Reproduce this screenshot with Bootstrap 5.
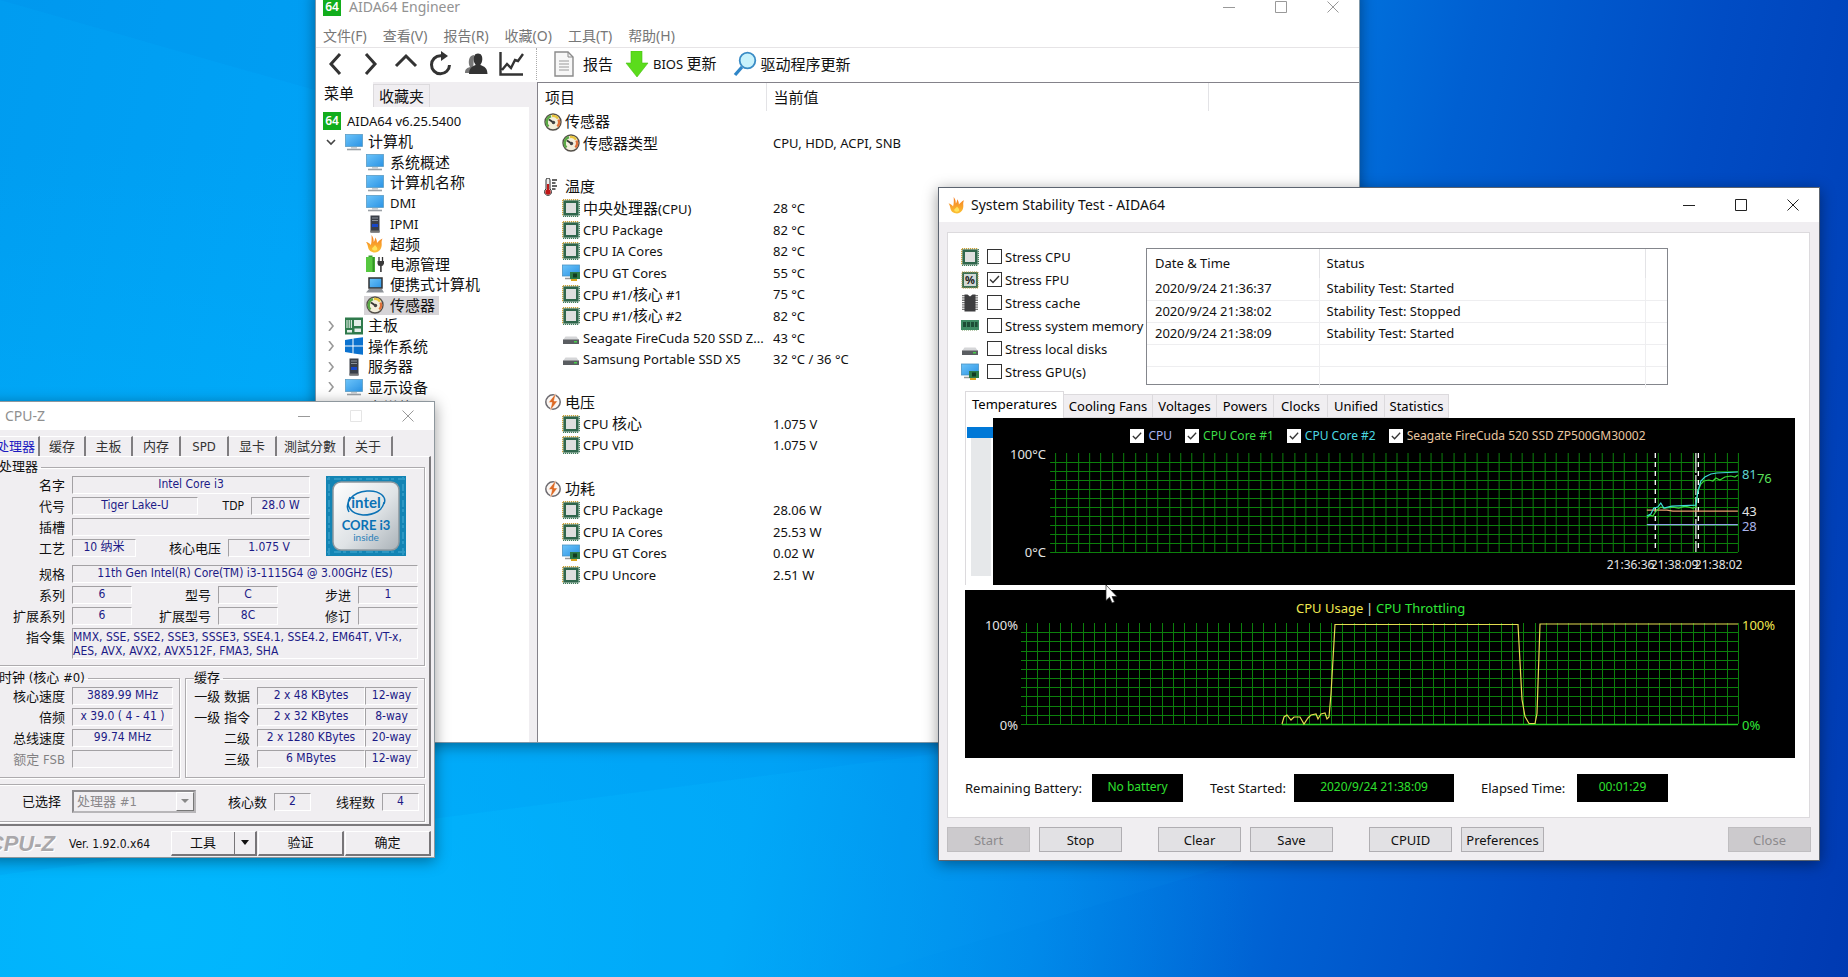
<!DOCTYPE html>
<html lang="zh-CN">
<head>
<meta charset="utf-8">
<meta name="viewport" content="width=device-width, initial-scale=1">
<title>Desktop</title>
<link rel="stylesheet" href="https://cdn.jsdelivr.net/npm/bootstrap@5.3.0/dist/css/bootstrap.min.css">
<style>
:root{--face:#f0eef1;--edge:#dcdadd;--ui:"Noto Sans","Noto Sans CJK SC",sans-serif;--tahoma:"DejaVu Sans Condensed","Noto Sans CJK SC",sans-serif}
body{font:13px/18px var(--ui);color:#111;background:#0a6fdc}
.desktop{min-height:100vh;overflow:hidden;background:
 radial-gradient(ellipse 60% 80% at 8% 95%,rgba(0,190,255,.8),rgba(0,190,255,0) 100%),
 linear-gradient(102deg,#009cf0 0%,#00a4f8 22%,#009cf4 45%,#0080e6 60%,#0060d2 72%,#004cc4 84%,#003ab2 100%)}
.rays{position:absolute;inset:0;width:100%;height:100%}
.win{position:absolute;background:#fff;box-shadow:0 3px 14px rgba(0,0,0,.4)}
.zh{font-size:15px}
.ico{width:18px;height:18px;flex:none}
.wbtn{width:52px;border:0;background:none;padding:0;color:#222;line-height:0}
.wbtn svg{width:12px;height:12px}
.dim .wbtn{color:#999}
.plain{border:0;background:none;padding:0;color:inherit}

/* AIDA64 main window */
.w-aida{left:315px;right:488px;top:-12px;border:1px solid #7f97a8}
.w-aida .titlebar{height:36px;color:#929292;font-size:14px;padding-left:7px}
.menubar{height:22px;color:#777;gap:16px;padding-left:7px}
.menubar button{font-size:14px}
.toolbar{height:35px;border-top:1px solid #e6e4e6;padding:0 0 3px 2px}
.tool{width:35px;height:32px;color:#333;line-height:0}
.tool svg{width:26px;height:26px}
.vdots{border-left:1px dotted #aaa;height:32px}
.side{width:222px;flex:none;background:var(--face);border-right:1px solid #84828a;padding-right:8px}
.sidetabs{height:25px}
.sidetabs button{font-size:15px;height:23px;padding:0 5px}
.sidetabs .on{background:#fff;width:57px;height:25px;padding:0 0 4px 8px;text-align:left}
.sidetabs .off{border:1px solid var(--edge);border-bottom:0;align-self:end}
.tree{background:#fff;display:grid;grid-template-rows:repeat(15,1fr);height:311px;padding:4px 0 0 7px;margin:0;list-style:none}
.tree li{display:flex;align-items:center}
.tree .chev{width:10px;height:10px;margin:0 9px 0 3px;color:#888}
.tree .t2{padding-left:43px}
.tree .sel{background:#d6d4d7;padding:0 4px 0 2px;margin-left:-2px;display:flex;align-items:center}
.tree .txt{margin-left:6px;white-space:nowrap}
.tree .t1 .txt{margin-left:5px}
.aidabody{min-height:660px}
.mainlist{border-top:1px solid #84828a;min-width:0}
.grid-t{table-layout:fixed;width:100%;border-collapse:collapse}
.grid-t td,.grid-t th{padding:0;font-weight:400;white-space:nowrap;line-height:18px}
.grid-t th{border-right:1px solid #e3e3e6}
.grid-t th:last-child{border:0}
.sensors th{height:28px;padding-left:7px}
.sensors tbody{height:475px}
.sensors tbody td{height:21px}
.sensors td+td{padding-left:7px}
.sensors .it{display:flex;align-items:center;gap:3px;padding-left:6px}
.sensors .sub{padding-left:24px}

/* Stability test */
.w-stab{left:938px;right:28px;top:187px;border:1px solid #5c6470;background:var(--face)}
.w-stab .titlebar{height:34px;background:#fff;font-size:14px}
.panelbox{background:#fff;border:1px solid var(--edge);margin:10px 9px 9px 8px;padding:15px 14px 15px 17px}
.checks{width:181px;margin:-3px 0 0 -4px}
.chk{height:23px;display:flex;align-items:center}
.chk label{margin-left:3px;white-space:nowrap}
.box{appearance:none;width:15px;height:15px;border:1px solid #333;background:#fff;margin:0;flex:none;border-radius:0}
.box:checked{background:#fff url("data:image/svg+xml,%3Csvg xmlns='http://www.w3.org/2000/svg' viewBox='0 0 13 13'%3E%3Cpath d='M2 6.5l3 3 6-6.5' fill='none' stroke='%23333' stroke-width='1.4'/%3E%3C/svg%3E")}
.logbox{width:522px;height:137px;border:1px solid #84868c}
.log th{height:29px;padding:0 0 1px 8px}
.log td{height:22px;line-height:17px;padding:0 0 0 8px;border:1px solid #eeeef0;border-left:0}
.log th+th,.log td+td{padding-left:7px}
.log td:last-child{border-right:0}
.log tr:last-child td{border-bottom:0}.log tbody tr:first-child td{border-top:0}
.ptabs{margin-top:7px;height:26px;align-items:flex-end}
.ptabs button{background:var(--face);border:1px solid var(--edge);border-left:0;height:24px;padding:0;flex:none}
.ptabs .on{background:#fff;border-left:1px solid var(--edge);border-bottom:0;height:27px;padding-bottom:3px}
.trk{width:28px;flex:none;padding:9px 0 0 1px;border-left:1px solid var(--edge)}
.trk input{appearance:none;writing-mode:vertical-lr;width:27px;height:149px;margin:0;display:block;background:linear-gradient(#e6e8ea,#e6e8ea) 4px 0/20px 100% no-repeat}
.trk input::-webkit-slider-thumb{appearance:none;width:27px;height:11px;background:#0078d7;border:0;border-radius:0}
.plot{background:#000;color:#e8e8e8}
.plot svg{display:block;width:100%;height:auto;overflow:visible}
.legend-row{height:34px;padding-top:1px;gap:13px;padding-right:12px;font-size:12px}
.legend-row .box{width:14px;height:14px;border-color:#fff}
.plot-low{margin-top:5px}
.lcd{background:#000;color:#2fe02f;height:28px;font-size:12px;line-height:26px;text-align:center;flex:none}
.lcd-s{width:91px}.lcd-l{width:160px}
.cap1{width:127px}.cap2{width:111px;padding-left:27px}.cap3{width:123px;padding-left:27px}
.wbs{gap:9px;padding:0 8px 8px}
.wbs .apart{margin-left:27px}
.wb{height:25px;width:83px;background:#e2e1e4;border:1px solid #b0aeb2;padding:0;line-height:20px;white-space:nowrap;color:#111}
.wb:disabled{background:#cccacd;border-color:#bfbdc0;color:#8c8a8d}

/* CPU-Z */
.w-cpuz{left:-14px;width:449px;top:401px;border:1px solid #8e979d;background:var(--face);font:12px/16px var(--tahoma)}
.w-cpuz .titlebar{height:28px;background:#fff;color:#8f8f8f;font-size:14px;padding-left:18px;font-family:var(--ui)}
.cz-tabs{padding:6px 0 0 6px;height:26px;font-size:13px}
.cz-tabs button{border-right:2px solid #7f7d80;border-top:1px solid #fff;height:20px;color:#333;white-space:nowrap;padding:0}
.cz-tabs .on{color:#1c1ac0}
.cz-page{border-right:2px solid #7b797c;border-bottom:2px solid #7b797c;border-top:1px solid #fff;margin-right:3px;padding:2px 4px 2px 5px}
.w-cpuz fieldset{border:1px solid #adabae;box-shadow:1px 1px 0 #fff,inset 1px 1px 0 #fff;padding:0 6px 6px 0}
.w-cpuz legend{float:none;width:auto;font-size:13px;line-height:16px;margin:0 0 1px 6px;padding:0 3px 0 0}
.fr{display:flex;height:17px;margin-bottom:4px}
.fr b{font-weight:400;font-size:13px;line-height:19px;text-align:right;padding-right:7px;white-space:nowrap;flex:none;width:79px;color:#111}
.fr b.tdp{font-size:12px;width:53px}
.fv{border:1px solid #a3a1a4;border-right-color:#fff;border-bottom-color:#fff;color:#1c1a86;text-align:center;white-space:nowrap;height:18px;flex:none;line-height:15px}
.w37{width:37px}.w53{width:53px}.w60{width:60px}.w101{width:101px}.w108{width:108px}.w238{width:238px}.w346{width:346px}
.fr b.l71{width:71px}.fr b.l78{width:78px}.fr b.l80{width:80px}.fr b.l86{width:86px}.fr b.l92{width:92px}
.spec{margin-top:5px}
.isa{line-height:14px;padding-top:1px}
.cz-clock{width:188px;margin-right:5px}.cz-cache{width:240px}
.w-cpuz fieldset.cz-pick{height:38px;margin-top:6px;padding:0 0 3px}
.cz-pick label{width:79px;font-size:13px;text-align:right;padding-right:11px}
.cz-sel{appearance:none;height:23px;width:124px;border:2px solid #8d8b8e;border-right-color:#b8b6b9;border-bottom-color:#b8b6b9;background:var(--face);color:#8a888b;padding:0 3px;font:13px/17px var(--tahoma);opacity:1}
.cz-drop{position:absolute;right:2px;top:2px;width:18px;height:19px;background:var(--face);border:1px solid #fff;border-right-color:#777;border-bottom-color:#777;pointer-events:none}
.cz-foot{padding:5px 3px 1px 0;gap:1px}
.cz-btn{height:25px;width:86px;background:var(--face);border:1px solid #fff;border-right:2px solid #777578;border-bottom:2px solid #777578;font-size:13px;padding:0;color:#111}
.cz-split{border-left:1px solid #777578;height:22px;padding:3px 5px 0;line-height:14px}
.cz-logo{width:68px;text-align:right;white-space:nowrap;font:italic bold 22px/24px "Liberation Sans",sans-serif;color:#a9a7aa;text-shadow:1px 1px 0 #fff}
.cz-ver{padding-left:13px}
.pointer{position:absolute;left:1105px;top:584px;width:13px;height:20px}
</style>
</head>
<body>
<svg width="0" height="0" class="position-absolute" aria-hidden="true">
<defs>
<linearGradient id="gm" x1="0" y1="0" x2="1" y2="1"><stop offset="0" stop-color="#6cc4fa"/><stop offset="1" stop-color="#2b93e4"/></linearGradient>
<linearGradient id="gf" x1="0" y1="0" x2="0" y2="1"><stop offset="0" stop-color="#f47a22"/><stop offset="1" stop-color="#fcc234"/></linearGradient>
<symbol id="i64" viewBox="0 0 18 18"><rect width="18" height="18" fill="#12ad1c"/><text x="9" y="13" font-size="12" font-weight="600" fill="#fff" text-anchor="middle" font-family="Noto Sans">64</text></symbol>
<symbol id="mon" viewBox="0 0 18 18"><rect x=".5" y="1.500" width="17" height="12" fill="url(#gm)" stroke="#5b9cc4" stroke-width=".8"/><path d="M6 14h6v1.500H6z" fill="#c8ccd0"/><path d="M2 16.500h14" stroke="#9aa0a6" stroke-width="1.600"/></symbol>
<symbol id="srv" viewBox="0 0 18 18"><rect x="4.500" y=".5" width="9" height="17" fill="#3a3f48"/><path d="M6 3h6M6 5.500h6" stroke="#8b929c"/><path d="M6 9h6v3H6z" fill="#1747c8"/><path d="M4.500 16.500h9" stroke="#777" stroke-width="2"/></symbol>
<symbol id="fire" viewBox="0 0 18 18"><path d="M5.500 0c1.800 2.500 2.300 4.500 2.200 7C8.700 6 9.200 4 9 2.500c1.500 1.500 2 3.500 2 5.500 1.500-1.500 3-3.500 5.500-4.500-1 2-1 3.500-.8 5.500.3 4.500-2.700 8.500-6.700 8.500S2.500 15 2 12C1.700 10 1 8 0 7c2 .3 3.500 1.300 4.800 3C5.800 7 5.700 3.500 5.500 0z" fill="url(#gf)"/><path d="M9 10c1 1.500 2.500 2 2.300 4.500C10 16.300 7 16 6 14c0-1.500 2-2 3-4z" fill="#ffe25a"/></symbol>
<symbol id="bat" viewBox="0 0 18 18"><rect x="0" y="2" width="9" height="15" fill="#56c840"/><rect x="2.500" y=".5" width="4" height="1.500" fill="#3b9c2c"/><path d="M7.500 2v15" stroke="#349426" stroke-width="2"/><path d="M13 2v4M16.500 2v4" stroke="#333" stroke-width="1.300"/><path d="M11.500 6h6.500v2.500q-.8 2.500-2.300 2.500v6h-1.600v-6Q11.700 11 11.500 8.500z" fill="#3a3a3a"/></symbol>
<symbol id="lap" viewBox="0 0 18 18"><rect x="3" y="2" width="13" height="10" fill="url(#gm)" stroke="#333" stroke-width="1.500"/><path d="M3 13h13l2 3.500H0z" fill="#8d9298"/></symbol>
<symbol id="gau" viewBox="0 0 18 18"><circle cx="9" cy="9" r="8" fill="#f3eedb" stroke="#54504a" stroke-width="1.400"/><path d="M4.500 13.500A6.200 6.200 0 0 1 7 3.200" fill="none" stroke="#5aa845" stroke-width="2.400"/><path d="M8 3a6.200 6.200 0 0 1 6 2.600" fill="none" stroke="#e8c43c" stroke-width="2.400"/><path d="M14.400 6.500a6.200 6.200 0 0 1-1 7" fill="none" stroke="#e07038" stroke-width="2.400"/><path d="M5 6.500l4.500 3" stroke="#333" stroke-width="1.800"/><circle cx="9.500" cy="9.500" r="1.700" fill="#444"/></symbol>
<symbol id="mob" viewBox="0 0 18 18"><rect width="18" height="17" y=".5" fill="#2f7a4c"/><path d="M2 3v8M4.200 3v8M6.400 3v8" stroke="#d7e6dc" stroke-width="1.200"/><path d="M9 3h7v6H9zM2 13h5v2.500H2zM9.500 11.500H16V15H9.500z" fill="#e4eee8"/></symbol>
<symbol id="wlogo" viewBox="0 0 18 18"><path d="M0 3l7.500-1.200v6.700H0zM8.500 1.600L18 .2v8.300H8.500zM0 9.500h7.500v6.700L0 15zM8.500 9.500H18v8.300l-9.500-1.400z" fill="#0b72cf"/></symbol>
<symbol id="chip" viewBox="0 0 18 18"><path d="M1 .8h16M.8 1v16" stroke="#c9a23c" stroke-width="1.500" stroke-dasharray="1.200 .8"/><path d="M1 17.300h16M17.300 1v16" stroke="#3f7b5a" stroke-width="1.300" stroke-dasharray="1.200 .8"/><rect x="1.400" y="1.400" width="15.200" height="15.200" fill="#2f664c"/><rect x="4" y="4" width="10" height="10" fill="#dedfdf"/></symbol>
<symbol id="fpu" viewBox="0 0 18 18"><rect x="1" y="1" width="16" height="16" fill="#3c7156" stroke="#b79c48" stroke-dasharray="1.200 .8"/><rect x="3" y="3" width="12" height="12" fill="#d2d8d4"/><text x="9" y="13" font-size="11" text-anchor="middle" font-weight="700" fill="#222" font-family="Noto Sans">%</text></symbol>
<symbol id="cache" viewBox="0 0 18 18"><path d="M2.500 1v16M15.500 1v16" stroke="#777" stroke-width="3" stroke-dasharray="1.300 1"/><path d="M3.500 .5h3l2.500 2 2.500-2h3v17h-11z" fill="#3d3d3f"/></symbol>
<symbol id="ram" viewBox="0 0 18 18"><path d="M0 3h18v10H0z" fill="#3f8b64"/><path d="M2 5h3v5H2zM6 5h3v5H6zM10 5h3v5h-3zM14 5h2.500v5H14z" fill="#1d4d36"/><path d="M1 13.500h16" stroke="#b5c9a8" stroke-dasharray="1 1"/></symbol>
<symbol id="disk" viewBox="0 0 18 18"><path d="M3.500 7.500h11l2.500 3.500H1z" fill="#d5d6d8"/><path d="M1 10.500h16V15H1z" fill="#5a5d61"/><path d="M12 12h3v1.500h-3z" fill="#48cf4c"/></symbol>
<symbol id="gpu" viewBox="0 0 18 18"><rect x=".5" y="1" width="17" height="11" fill="url(#gm)" stroke="#4a93c4" stroke-width=".8"/><path d="M3 14.500h6" stroke="#999" stroke-width="1.500"/><path d="M8 8h10v7H8z" fill="#2c7b48"/><path d="M11 9.500h4v4h-4z" fill="#123d22"/><path d="M9 16h6" stroke="#d9a520" stroke-width="2"/></symbol>
<symbol id="thermo" viewBox="0 0 18 18"><path d="M2 2a2 2 0 0 1 4 0v9a3.500 3.500 0 1 1-4 0z" fill="#eee" stroke="#333"/><path d="M4 6v6" stroke="#c01818" stroke-width="2.200"/><circle cx="4" cy="14" r="2.700" fill="#c01818"/><path d="M8 2h5M8 5h3.500M8 8h5M8 11h3.500" stroke="#333" stroke-width="1.300"/></symbol>
<symbol id="bolt" viewBox="0 0 18 18"><circle cx="9" cy="9" r="7.200" fill="#fbf6f2" stroke="#6c6a70" stroke-width="1.500"/><path d="M12 0L4.500 9.500H8L6 18l7.500-10H10z" fill="#dd6a25" stroke="#fff" stroke-width=".5"/></symbol>
<symbol id="wmin" viewBox="0 0 12 12"><path d="M0 6.500h12" stroke="currentColor"/></symbol>
<symbol id="wmax" viewBox="0 0 12 12"><path d="M.5 .5h11v11H.5z" fill="none" stroke="currentColor"/></symbol>
<symbol id="wcls" viewBox="0 0 12 12"><path d="M.5 .5l11 11M11.500 .5l-11 11" stroke="currentColor"/></symbol>
</defs>
</svg>

<main class="desktop position-relative">
<svg class="rays" viewBox="0 0 1848 977" preserveAspectRatio="none" aria-hidden="true">
  <path d="M860 977L1230 865 1400 700V300L0 880v97z" fill="#18a8ff" opacity=".06"/>
  <path d="M0 875L940 753V742H0z" fill="#0078e0" opacity=".08"/>
  <path d="M0 0L315 90V0z" fill="#0070d8" opacity=".08"/>
</svg>

<!-- AIDA64 Engineer -->
<section class="win w-aida" aria-label="AIDA64 Engineer">
  <header class="titlebar dim d-flex align-items-center">
    <svg class="ico"><use href="#i64"/></svg><span class="ms-2 me-auto">AIDA64 Engineer</span>
    <button class="wbtn" aria-label="Minimize"><svg><use href="#wmin"/></svg></button><button class="wbtn" aria-label="Maximize"><svg><use href="#wmax"/></svg></button><button class="wbtn" aria-label="Close"><svg><use href="#wcls"/></svg></button>
  </header>
  <nav class="menubar d-flex align-items-center">
    <button class="plain">文件(F)</button><button class="plain">查看(V)</button><button class="plain">报告(R)</button><button class="plain">收藏(O)</button><button class="plain">工具(T)</button><button class="plain">帮助(H)</button>
  </nav>
  <div class="toolbar d-flex align-items-center">
    <button class="plain tool" aria-label="Back"><svg viewBox="0 0 26 26"><path d="M17 3l-9 10 9 10" fill="none" stroke="currentColor" stroke-width="3"/></svg></button>
    <button class="plain tool" aria-label="Forward"><svg viewBox="0 0 26 26"><path d="M8 3l9 10-9 10" fill="none" stroke="currentColor" stroke-width="3"/></svg></button>
    <button class="plain tool" aria-label="Up"><svg viewBox="0 0 26 26"><path d="M3 15l10-10 10 10" fill="none" stroke="currentColor" stroke-width="3"/></svg></button>
    <button class="plain tool" aria-label="Refresh"><svg viewBox="0 0 26 26"><path d="M21.500 14a9 9 0 1 1-9-9.200h3" fill="none" stroke="currentColor" stroke-width="3"/><path d="M13 0l7 5-7 5z" fill="currentColor"/></svg></button>
    <button class="plain tool" aria-label="Users"><svg viewBox="0 0 26 26"><path d="M2 22c0-4 2-5 5-6-2-3-2-12 4-12l-1 18z" fill="#777"/><path d="M15 2.500c3.500 0 4.500 3 4.300 6-.2 2.500-1 4-2 5.500 4 1.500 7 2.500 7.200 9H6c.2-6 3-7.500 6.700-9-1-1.500-2-3-2-5.500 0-3 .8-6 4.300-6z" fill="currentColor"/></svg></button>
    <button class="plain tool" aria-label="Graph"><svg viewBox="0 0 26 26"><path d="M2.500 1v22.500H25M4 19l5-6 4 4 4-8 3 1 5-7" fill="none" stroke="currentColor" stroke-width="2.400"/></svg></button>
    <span class="vdots ms-2 ps-1 me-2"></span>
    <button class="plain d-flex align-items-center ms-1"><svg width="22" height="28" viewBox="0 0 22 28"><path d="M2 2h13l5 5v19H2z" fill="#f7f7f7" stroke="#8a8a8a" stroke-width="1.400"/><path d="M15 2v5h5" fill="none" stroke="#8a8a8a"/><path d="M6 11h10M6 14h10M6 17h10M6 20h10" stroke="#999"/></svg><span class="zh ms-2">报告</span></button>
    <button class="plain d-flex align-items-center ms-2 ps-1"><svg width="24" height="26" viewBox="0 0 24 26"><path d="M6 0h11v12h6L12 26 1 12h5z" fill="#5bdc1c" stroke="#48c010" stroke-width=".6"/></svg><span class="ms-1">BIOS <span class="zh">更新</span></span></button>
    <button class="plain d-flex align-items-center ms-3"><svg width="24" height="26" viewBox="0 0 24 26"><path d="M9 16l-7 8" stroke="#2f86c8" stroke-width="3.400"/><circle cx="14.500" cy="9.500" r="7.800" fill="#c8f2fc" stroke="#3a8cc6" stroke-width="1.800"/></svg><span class="zh ms-1">驱动程序更新</span></button>
  </div>
  <div class="aidabody d-flex">
    <div class="side d-flex flex-column">
      <div class="sidetabs d-flex"><button class="plain on">菜单</button><button class="plain off">收藏夹</button></div>
      <ul class="tree" id="tree"></ul>
      <div class="flex-grow-1 bg-white"></div>
    </div>
    <div class="mainlist flex-grow-1">
      <table class="grid-t sensors">
        <colgroup><col style="width:228px"><col style="width:442px"><col></colgroup>
        <thead><tr><th class="zh">项目</th><th class="zh">当前值</th><th></th></tr></thead>
        <tbody id="sensors"></tbody>
      </table>
    </div>
  </div>
</section>

<!-- System Stability Test -->
<section class="win w-stab" aria-label="System Stability Test">
  <header class="titlebar d-flex align-items-center">
    <svg class="ms-2 me-1" width="20" height="17"><use href="#fire"/></svg><span class="me-auto">System Stability Test - AIDA64</span>
    <button class="wbtn" aria-label="Minimize"><svg><use href="#wmin"/></svg></button><button class="wbtn" aria-label="Maximize"><svg><use href="#wmax"/></svg></button><button class="wbtn" aria-label="Close"><svg><use href="#wcls"/></svg></button>
  </header>
  <div class="panelbox">
    <div class="d-flex">
      <div class="checks" id="checks"></div>
      <div class="logbox ms-1">
        <table class="grid-t log">
          <colgroup><col style="width:172px"><col style="width:326px"><col></colgroup>
          <thead><tr><th>Date &amp; Time</th><th>Status</th><th></th></tr></thead>
          <tbody>
            <tr><td>2020/9/24 21:36:37</td><td>Stability Test: Started</td><td></td></tr>
            <tr><td>2020/9/24 21:38:02</td><td>Stability Test: Stopped</td><td></td></tr>
            <tr><td>2020/9/24 21:38:09</td><td>Stability Test: Started</td><td></td></tr>
            <tr><td></td><td></td><td></td></tr>
            <tr><td></td><td></td><td></td></tr>
          </tbody>
        </table>
      </div>
    </div>
    <div class="ptabs d-flex" id="ptabs"></div>
    <div class="d-flex">
      <div class="trk"><input type="range" min="0" max="100" value="0" aria-label="Scale"></div>
      <div class="plot flex-grow-1">
        <div class="legend-row d-flex align-items-center justify-content-center" id="legend"></div>
        <svg viewBox="0 0 801 133" font-size="13" fill="#e4e4e4">
          <path id="grid1" stroke="#0c800c" fill="none"/>
          <path d="M661.500 1v99M704.500 1v99" stroke="#fff" stroke-width="1.300" stroke-dasharray="5 4"/>
          <path d="M702 1v99" stroke="#d8e8d8" stroke-width="1.300" stroke-dasharray="20 2"/>
          <path d="M653 72.500h91" stroke="#8fa0e8" stroke-width="1.200" fill="none"/>
          <path d="M653 58h20l6 1h65" stroke="#e8a070" stroke-width="1.200" fill="none"/>
          <path d="M653 66l3-3 3 1 4-6 4-3 4 1 8-1 6 1 6-2 8 2 3-1 2-16 3-7 3-3 5-1 4 1 3-3 4 2 5-3 6-1 4 1 3-2" stroke="#3ad83a" stroke-width="1.200" fill="none"/>
          <path d="M653 64l4-2 3-6 4-1 3-4 3 5 8-2 24-1 2-14 3-10 4-4 6-3 6-1 21-1" stroke="#3fdcd8" stroke-width="1.200" fill="none"/>
          <text x="53" y="7" text-anchor="end">100°C</text><text x="53" y="105" text-anchor="end">0°C</text>
          <text x="748" y="27" fill="#5fd4d0">81</text><text x="763" y="31" fill="#5be05b">76</text><text x="748" y="64">43</text><text x="748" y="79" fill="#aab4ea">28</text>
          <g font-size="12"><text x="613" y="117">21:36:36</text><text x="657" y="117">21:38:09</text><text x="701" y="117">21:38:02</text></g>
        </svg>
      </div>
    </div>
    <div class="plot plot-low">
      <svg viewBox="0 0 830 168" font-size="13" fill="#e4e4e4">
        <path id="grid2" stroke="#0c800c" fill="none"/>
        <path d="M317 134.500h456" stroke="#22cc22" stroke-width="1.300"/>
        <path d="M317 134l2-7 3-2 4 5 3-3 6 0 4 7 4-6 3-3 5-1 2 5 3-5 4-1 2 6 2-2 2-23 4-69.500H553l4 75 3 17 4 7h6l2-10 3-89.500h198" stroke="#e4dc50" stroke-width="1.200" fill="none"/>
        <text x="331" y="23" fill="#f0e850">CPU Usage</text><text x="401" y="23">|</text><text x="411" y="23" fill="#30e838">CPU Throttling</text>
        <text x="53" y="40" text-anchor="end">100%</text><text x="53" y="140" text-anchor="end">0%</text>
        <text x="777" y="40" fill="#f0e850">100%</text><text x="777" y="140" fill="#30e838">0%</text>
      </svg>
    </div>
    <div class="d-flex align-items-center pt-3">
      <div class="cap1">Remaining Battery:</div><output class="lcd lcd-s">No battery</output>
      <div class="cap2">Test Started:</div><output class="lcd lcd-l">2020/9/24 21:38:09</output>
      <div class="cap3">Elapsed Time:</div><output class="lcd lcd-s">00:01:29</output>
    </div>
  </div>
  <div class="wbs d-flex">
    <button class="wb" disabled>Start</button><button class="wb">Stop</button>
    <button class="wb apart">Clear</button><button class="wb">Save</button>
    <button class="wb apart">CPUID</button><button class="wb">Preferences</button>
    <button class="wb ms-auto" disabled>Close</button>
  </div>
</section>

<!-- CPU-Z -->
<section class="win w-cpuz" aria-label="CPU-Z">
  <header class="titlebar dim d-flex align-items-center">
    <span class="me-auto">CPU-Z</span>
    <button class="wbtn" aria-label="Minimize"><svg><use href="#wmin"/></svg></button><button class="wbtn opacity-25" aria-label="Maximize"><svg><use href="#wmax"/></svg></button><button class="wbtn" aria-label="Close"><svg><use href="#wcls"/></svg></button>
  </header>
  <nav class="cz-tabs d-flex" id="cztabs"></nav>
  <div class="cz-page">
    <fieldset>
      <legend>处理器</legend>
      <div class="d-flex">
        <div>
          <div class="fr"><b>名字</b><span class="fv w238">Intel Core i3</span></div>
          <div class="fr"><b>代号</b><span class="fv" style="width:126px">Tiger Lake-U</span><b class="tdp">TDP</b><span class="fv" style="width:59px">28.0 W</span></div>
          <div class="fr"><b>插槽</b><span class="fv w238"></span></div>
          <div class="fr"><b>工艺</b><span class="fv" style="width:64px">10 纳米</span><b class="l92">核心电压</b><span class="fv" style="width:82px">1.075 V</span></div>
        </div>
        <svg class="ms-3" width="80" height="80" viewBox="0 0 80 80">
          <defs><linearGradient id="gi" x1="0" y1="0" x2="1" y2="1"><stop offset="0" stop-color="#fff"/><stop offset=".55" stop-color="#dfe3e6"/><stop offset="1" stop-color="#aab2b8"/></linearGradient></defs>
          <rect width="80" height="80" fill="#1384b4"/>
          <path d="M1 3h78M1 76h78M3 1v78M77 1v78" stroke="#2d98c4" stroke-width="2" stroke-dasharray="3 4 7 2"/>
          <rect x="7" y="6" width="66" height="68" rx="8" fill="url(#gi)" stroke="#8d989f" stroke-width="1.500"/>
          <path d="M23 36c-5-9 3-20 18-21 13-1 20 6 17 13M24 21c-5 9 1 17 13 18 12 0 20-5 21-13" fill="none" stroke="#0b72b5" stroke-width="1.500"/>
          <text x="40" y="32" text-anchor="middle" font-family="Lato" font-weight="700" font-size="15" fill="#0b72b5">intel</text>
          <text x="40" y="54" text-anchor="middle" font-family="Lato" font-weight="700" font-size="13" fill="#0b72b5">CORE i3</text>
          <text x="40" y="65" text-anchor="middle" font-family="Lato" font-size="10" fill="#2b80b8">inside</text>
        </svg>
      </div>
      <div class="fr spec"><b>规格</b><span class="fv w346">11th Gen Intel(R) Core(TM) i3-1115G4 @ 3.00GHz (ES)</span></div>
      <div class="fr"><b>系列</b><span class="fv w60">6</span><b class="l86">型号</b><span class="fv w60">C</span><b class="l80">步进</b><span class="fv w60">1</span></div>
      <div class="fr"><b>扩展系列</b><span class="fv w60">6</span><b class="l86">扩展型号</b><span class="fv w60">8C</span><b class="l80">修订</b><span class="fv w60"></span></div>
      <div class="fr h-auto mb-0"><b>指令集</b><span class="fv w346 text-start h-auto isa">MMX, SSE, SSE2, SSE3, SSSE3, SSE4.1, SSE4.2, EM64T, VT-x,<br>AES, AVX, AVX2, AVX512F, FMA3, SHA</span></div>
    </fieldset>
    <div class="d-flex mt-1">
      <fieldset class="cz-clock">
        <legend>时钟 (核心 #0)</legend>
        <div class="fr"><b>核心速度</b><span class="fv w101">3889.99 MHz</span></div>
        <div class="fr"><b>倍频</b><span class="fv w101">x 39.0 ( 4 - 41 )</span></div>
        <div class="fr"><b>总线速度</b><span class="fv w101">99.74 MHz</span></div>
        <div class="fr"><b class="opacity-50">额定 FSB</b><span class="fv w101"></span></div>
      </fieldset>
      <fieldset class="cz-cache">
        <legend class="ms-2">缓存</legend>
        <div class="fr"><b class="l71">一级 数据</b><span class="fv w108">2 x 48 KBytes</span><span class="fv w53 ms-auto">12-way</span></div>
        <div class="fr"><b class="l71">一级 指令</b><span class="fv w108">2 x 32 KBytes</span><span class="fv w53 ms-auto">8-way</span></div>
        <div class="fr"><b class="l71">二级</b><span class="fv w108">2 x 1280 KBytes</span><span class="fv w53 ms-auto">20-way</span></div>
        <div class="fr"><b class="l71">三级</b><span class="fv w108">6 MBytes</span><span class="fv w53 ms-auto">12-way</span></div>
      </fieldset>
    </div>
    <fieldset class="cz-pick d-flex align-items-center">
      <label for="cpusel">已选择</label>
      <div class="position-relative"><select id="cpusel" class="cz-sel" disabled><option>处理器 #1</option></select><span class="cz-drop"><svg width="16" height="16" viewBox="0 0 16 16" class="d-block"><path d="M4 6h8l-4 4z" fill="#888"/></svg></span></div>
      <div class="fr mb-0"><b class="l78">核心数</b><span class="fv w37">2</span><b class="l71">线程数</b><span class="fv w37">4</span></div>
    </fieldset>
  </div>
  <div class="cz-foot d-flex align-items-center">
    <span class="cz-logo">CPU-Z</span><span class="cz-ver me-auto">Ver. 1.92.0.x64</span>
    <button class="cz-btn d-flex align-items-center"><span class="flex-grow-1">工具</span><span class="cz-split"><svg width="10" height="8" viewBox="0 0 10 8"><path d="M1 1h8L5 6z" fill="#111"/></svg></span></button><button class="cz-btn">验证</button><button class="cz-btn">确定</button>
  </div>
</section>

<svg class="pointer" viewBox="0 0 13 20" aria-hidden="true"><path d="M1 1v15.500l3.500-3.200 2.500 5.700 2.500-1-2.500-5.500H12z" fill="#fff" stroke="#222" stroke-width=".7"/></svg>
</main>

<script src="https://cdn.jsdelivr.net/npm/bootstrap@5.3.0/dist/js/bootstrap.bundle.min.js"></script>
<script>
const icon = n => `<svg class="ico"><use href="#${n}"/></svg>`;
// Chinese runs are set larger than the Latin text beside them
const zh = s => s.replace(/[\u4e00-\u9fff]+/g, m => `<span class="zh">${m}</span>`);
const $ = id => document.getElementById(id);

const open = '<svg class="chev" viewBox="0 0 10 10"><path d="M1 3l4 4 4-4" fill="none" stroke="#444" stroke-width="1.600"/></svg>';
const shut = '<svg class="chev" viewBox="0 0 10 10"><path d="M3 0l4 5-4 5" fill="none" stroke="#999" stroke-width="1.600"/></svg>';
$('tree').innerHTML = [
  [0,'i64','AIDA64 v6.25.5400'],[1,'mon','计算机',open],[2,'mon','系统概述'],[2,'mon','计算机名称'],[2,'mon','DMI'],[2,'srv','IPMI'],
  [2,'fire','超频'],[2,'bat','电源管理'],[2,'lap','便携式计算机'],[2,'gau','传感器','sel'],
  [1,'mob','主板',shut],[1,'wlogo','操作系统',shut],[1,'srv','服务器',shut],[1,'mon','显示设备',shut],[1,'disk','多媒体',shut]
].map(([l,i,t,x]) => {
  const body = icon(i) + `<span class="txt">${zh(t)}</span>`;
  return `<li class="t${l}">` + (x === 'sel' ? `<span class="sel">${body}</span>` : (x || '') + body) + '</li>';
}).join('');

$('sensors').innerHTML = [
  [0,'gau','传感器'],[1,'gau','传感器类型','CPU, HDD, ACPI, SNB'],[],
  [0,'thermo','温度'],[1,'chip','中央处理器(CPU)','28 °C'],[1,'chip','CPU Package','82 °C'],[1,'chip','CPU IA Cores','82 °C'],
  [1,'gpu','CPU GT Cores','55 °C'],[1,'chip','CPU #1/核心 #1','75 °C'],[1,'chip','CPU #1/核心 #2','82 °C'],
  [1,'disk','Seagate FireCuda 520 SSD Z...','43 °C'],[1,'disk','Samsung Portable SSD X5','32 °C / 36 °C'],[],
  [0,'bolt','电压'],[1,'chip','CPU 核心','1.075 V'],[1,'chip','CPU VID','1.075 V'],[],
  [0,'bolt','功耗'],[1,'chip','CPU Package','28.06 W'],[1,'chip','CPU IA Cores','25.53 W'],[1,'gpu','CPU GT Cores','0.02 W'],[1,'chip','CPU Uncore','2.51 W']
].map(([l,i,t,v]) => `<tr><td>${t ? `<div class="it${l ? ' sub' : ''}">${icon(i)}<span>${zh(t)}</span></div>` : ''}</td><td>${v || ''}</td><td></td></tr>`).join('');

$('checks').innerHTML = [['chip','CPU'],['fpu','FPU',1],['cache','cache'],['ram','system memory'],['disk','local disks'],['gpu','GPU(s)']]
  .map(([i,t,c],n) => `<div class="chk">${icon(i)}<input class="box ms-2" type="checkbox" id="s${n}"${c ? ' checked' : ''}><label for="s${n}">Stress ${t}</label></div>`).join('');

$('ptabs').innerHTML = [['Temperatures',99],['Cooling Fans',89],['Voltages',64],['Powers',57],['Clocks',54],['Unified',57],['Statistics',64]]
  .map(([t,w],n) => `<button${n ? '' : ' class="on"'} style="width:${w}px">${t}</button>`).join('');

$('legend').innerHTML = [['CPU','#a9b4f2'],['CPU Core #1','#3cdc46'],['CPU Core #2','#4cd8e0'],['Seagate FireCuda 520 SSD ZP500GM30002','#e9c7a0']]
  .map(([t,c],n) => `<span class="d-flex align-items-center gap-1"><input class="box" type="checkbox" id="l${n}" checked><label for="l${n}" style="color:${c}">${t}</label></span>`).join('');

$('cztabs').innerHTML = [['处理器',47],['缓存',46],['主板',47],['内存',48],['SPD',48],['显卡',48],['測試分數',68],['关于',48]]
  .map(([t,w],n) => `<button class="plain${n ? '' : ' on'}" style="width:${w}px;border-right:2px solid #7f7d80">${t}</button>`).join('');

// graph paper: ten percent rows, one column per time step
function paper(id, x0, xFirst, x1, top, bottom, cols) {
  let d = '';
  const dx = (x1 - xFirst) / cols, dy = (bottom - top) / 11;
  for (let i = 0; i <= cols; i++) d += `M${Math.round(xFirst + i * dx) + .5} ${top}V${bottom}`;
  for (let j = 0; j < 11; j++) d += `M${x0} ${Math.round(bottom - j * dy) + .5}H${x1}`;
  $(id).setAttribute('d', d);
}
paper('grid1', 57, 62, 744, 1, 100, 60);
paper('grid2', 56, 61, 773, 33, 134, 63);
</script>
</body>
</html>
